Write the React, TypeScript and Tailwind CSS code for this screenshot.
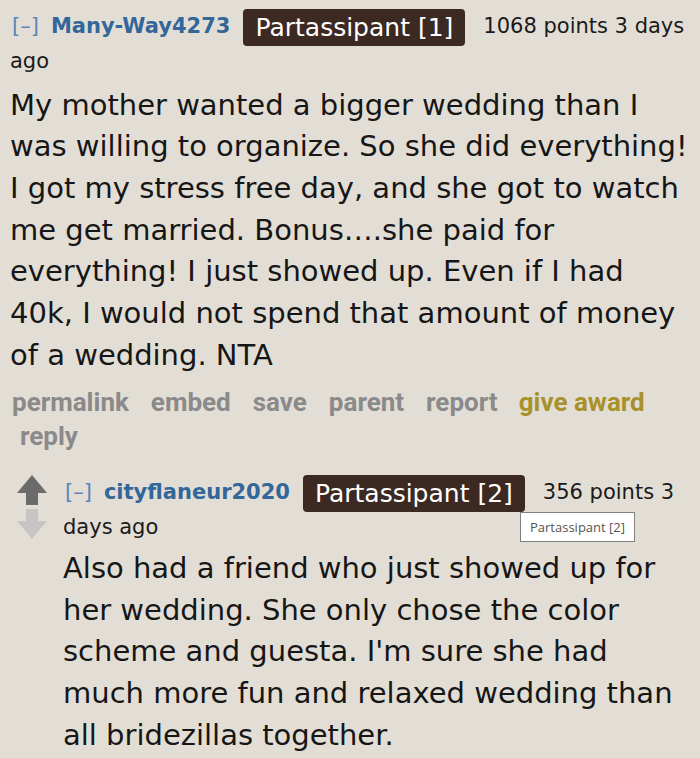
import React from 'react';

const verdana = { fontFamily: '"DejaVu Sans", Verdana, sans-serif' };
const actionFont = { fontFamily: 'Roboto, "Liberation Sans", Arial, sans-serif' };

function Badge({ label }: { label: string }) {
    return (
        <span className="inline-block -my-[2px] rounded-[4px] bg-[#3c2a22] px-[12px] text-[25px] leading-[37px] text-white align-middle">
            {label}
        </span>
    );
}

function Arrow({ up }: { up: boolean }) {
    return (
        <svg width="30" height="30" viewBox="0 0 30 30" className={up ? '' : 'rotate-180'}>
            <path d="M15 0 L30 18 L21 18 L21 30 L9 30 L9 18 L0 18 Z" fill={up ? '#6b6b6b' : '#c6c5c3'} />
        </svg>
    );
}

function Header({ user, badge, points }: { user: string; badge: string; points: string }) {
    return (
        <div className="text-[21px] leading-[34px] text-[#1a1a1a]" style={verdana}>
            <span className="pl-[2px] font-normal text-[#5b86ba]">[–]</span>
            <span className="ml-[12px] font-bold text-[#336699]">{user}</span>
            <span className="ml-[13px] mr-[18px]"><Badge label={badge} /></span>
            <span>{points}</span>
        </div>
    );
}

export default function App() {
    return (
        <div className="relative h-[758px] w-[700px] overflow-hidden bg-[#e3ded5] text-[#161616]">
            {/* First comment */}
            <div className="pl-[10px] pt-[9px]">
                <Header user="Many-Way4273" badge="Partassipant [1]" points="1068 points 3 days ago" />
                <div className="mt-[7px] text-[29px] leading-[41.7px]" style={verdana}>
                    My mother wanted a bigger wedding than I<br />
                    was willing to organize. So she did everything!<br />
                    I got my stress free day, and she got to watch<br />
                    me get married. Bonus….she paid for<br />
                    everything! I just showed up. Even if I had<br />
                    40k, I would not spend that amount of money<br />
                    of a wedding. NTA
                </div>
                <div className="mt-[9px] text-[26px] font-bold leading-[34px] text-[#8a8a8a]" style={actionFont}>
                    <div className="flex pl-[2px]">
                        <span className="mr-[22px]">permalink</span>
                        <span className="mr-[22px]">embed</span>
                        <span className="mr-[22px]">save</span>
                        <span className="mr-[22px]">parent</span>
                        <span className="mr-[21px]">report</span>
                        <span className="text-[#a8912b]">give award</span>
                    </div>
                    <div className="pl-[10px]">reply</div>
                </div>
            </div>

            {/* Reply comment */}
            <div className="flex gap-[16px] pl-[17px] pt-[22px]">
                <div className="flex shrink-0 flex-col gap-[4px]">
                    <Arrow up />
                    <Arrow up={false} />
                </div>
                <div className="pr-[8px]">
                    <Header user="cityflaneur2020" badge="Partassipant [2]" points="356 points 3 days ago" />
                    <div className="mt-[4px] text-[29px] leading-[41.7px]" style={verdana}>
                        Also had a friend who just showed up for<br />
                        her wedding. She only chose the color<br />
                        scheme and guesta. I'm sure she had<br />
                        much more fun and relaxed wedding than<br />
                        all bridezillas together.
                    </div>
                </div>
            </div>

            {/* Tooltip */}
            <div
                className="absolute left-[520px] top-[512px] border border-[#808080] bg-white px-[9px] text-[13px] leading-[28px] text-[#555]"
                style={{ fontFamily: '"Open Sans", sans-serif' }}
            >
                Partassipant [2]
            </div>
        </div>
    );
}
